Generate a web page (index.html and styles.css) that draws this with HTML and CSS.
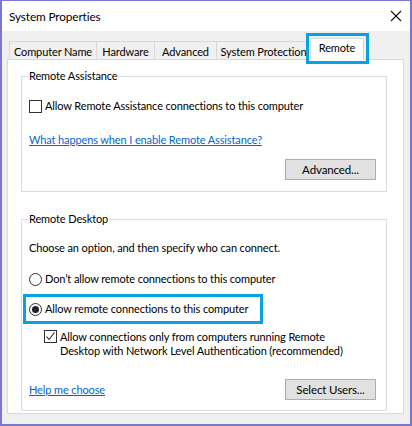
FILE: index.html
```html
<!DOCTYPE html>
<html lang="en">
<head>
<meta charset="utf-8">
<title>System Properties</title>
<link rel="stylesheet" href="styles.css">
</head>
<body>
<div class="window">
  <div class="titlebar">
    <span class="title">System Properties</span>
    <svg class="close" width="12" height="12" viewBox="0 0 12 12"><path d="M1 1L11 11M11 1L1 11" stroke="#111" stroke-width="1.1" fill="none"/></svg>
  </div>
  <div class="client">
    <div class="tabs">
      <div class="tab t1">Computer Name</div>
      <div class="tab t2">Hardware</div>
      <div class="tab t3">Advanced</div>
      <div class="tab t4">System Protection</div>
      <div class="tab active">Remote</div>
    </div>
    <div class="panel">
      <fieldset class="group g1">
        <legend>Remote Assistance</legend>
        <label class="row check-row">
          <span class="checkbox"></span>
          <span>Allow Remote Assistance connections to this computer</span>
        </label>
        <a class="link link1" href="#">What happens when I enable Remote Assistance?</a>
        <div class="btn-row">
          <button class="btn">Advanced...</button>
        </div>
      </fieldset>
      <fieldset class="group g2">
        <legend>Remote Desktop</legend>
        <p class="intro">Choose an option, and then specify who can connect.</p>
        <label class="row radio-row r1">
          <span class="radio"></span>
          <span>Don’t allow remote connections to this computer</span>
        </label>
        <label class="row radio-row r2 marked">
          <span class="radio on"></span>
          <span>Allow remote connections to this computer</span>
        </label>
        <label class="row nla">
          <span class="checkbox checked"><svg width="11" height="11" viewBox="0 0 11 11"><path d="M1.5 5.5L4 8.5L9.5 1.5" stroke="#222" stroke-width="1.1" fill="none"/></svg></span>
          <span>Allow connections only from computers running Remote<br>Desktop with Network Level Authentication (recommended)</span>
        </label>
        <div class="foot">
          <a class="link" href="#">Help me choose</a>
          <button class="btn">Select Users...</button>
        </div>
      </fieldset>
    </div>
  </div>
</div>
</body>
</html>
```
FILE: styles.css
```css
* { box-sizing: border-box; }
html, body { margin: 0; padding: 0; background: #fff; }
body {
  font-family: Lato, "Liberation Sans", sans-serif;
  font-size: 11px;
  letter-spacing: -0.12px;
  color: #000;
}
.window {
  width: 412px;
  height: 426px;
  border-style: solid;
  border-color: #7a76d6;
  border-width: 1px 2px 2px 2px;
  display: flex;
  flex-direction: column;
  background: #f0f0f0;
}
.titlebar {
  height: 30px;
  background: #fff;
  display: flex;
  align-items: center;
  justify-content: space-between;
  padding: 0 8px 0 7px;
}
.title { font-size: 11.8px; padding-top: 1px; }
.client {
  flex: 1;
  padding: 5px 6px 10px 5px;
  display: flex;
  flex-direction: column;
}
.tabs {
  display: flex;
  align-items: flex-end;
  height: 23px;
  padding-left: 2px;
  position: relative;
  z-index: 1;
}
.tab {
  height: 18px;
  border: 1px solid #d9d9d9;
  border-bottom: none;
  background: #f0f0f0;
  display: flex;
  align-items: center;
  justify-content: center;
  margin-right: -1px;
  white-space: nowrap;
  padding-top: 1px;
}
.t1 { width: 88px; }
.t2 { width: 59px; }
.t3 { width: 63px; }
.t4 { width: 95px; }
.tab.active {
  width: 54px;
  height: 22px;
  background: #fff;
  margin-bottom: -1px;
  position: relative;
  align-items: flex-start;
  padding-top: 2px;
}
.tab.active::after {
  content: "";
  position: absolute;
  left: -5px;
  right: -6px;
  top: -6px;
  bottom: -4px;
  border: 3px solid #0aa1e3;
}
.panel {
  flex: 1;
  background: #fff;
  border: 1px solid #d9d9d9;
  padding: 8px 16px 0 13px;
  display: flex;
  flex-direction: column;
}
.group {
  margin: 0;
  border: 1px solid #dcdcdc;
  padding: 0 10px 0 7px;
  min-width: 0;
}
.group legend {
  padding: 0 1px;
  margin-left: -1px;
  line-height: 16px;
}
.g1 { height: 124px; }
.g2 { height: 200px; margin-top: 19px; }
.row {
  display: flex;
  align-items: center;
  gap: 3px;
  line-height: 16px;
}
.checkbox, .radio {
  width: 13px;
  height: 13px;
  border: 1px solid #333;
  background: #fff;
  flex: none;
  display: flex;
  align-items: center;
  justify-content: center;
}
.radio { border-radius: 50%; }
.radio.on::before {
  content: "";
  width: 7px;
  height: 7px;
  border-radius: 50%;
  background: #222;
}
.check-row { margin-top: 14px; }
.link {
  display: block;
  color: #0066cc;
  text-decoration: underline;
  line-height: 16px;
}
.link1 { margin-top: 18px; }
.btn-row { display: flex; justify-content: flex-end; margin-top: 11px; }
.btn {
  width: 91px;
  height: 21px;
  background: #e1e1e1;
  border: 1px solid #adadad;
  font: inherit;
  font-size: 11.5px;
  letter-spacing: inherit;
  color: #000;
  padding: 0;
}
.intro { margin: 13px 0 0 0; line-height: 16px; }
.r1 { margin-top: 15px; }
.r2 { margin-top: 14px; position: relative; }
.r2::after {
  content: "";
  position: absolute;
  left: -6px;
  width: 234px;
  top: -7px;
  bottom: -7px;
  border: 3px solid #0aa1e3;
}
.nla {
  margin-top: 13px;
  margin-left: 15px;
  align-items: flex-start;
  line-height: 14px;
}
.foot {
  display: flex;
  justify-content: space-between;
  align-items: center;
  margin-top: 21px;
}
```
